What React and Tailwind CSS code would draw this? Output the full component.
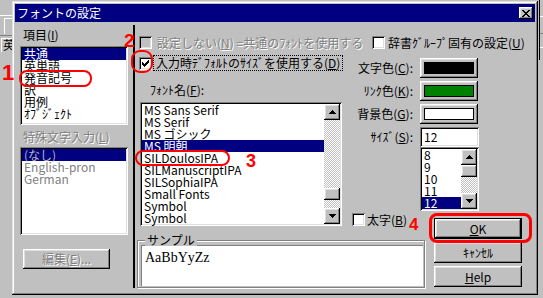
import React from "react";

const RAISED =
  "shadow-[inset_-1px_-1px_#000000,inset_1px_1px_#ffffff,inset_-2px_-2px_#808080,inset_2px_2px_#dfdfdf]";
const SUNKEN =
  "shadow-[inset_1px_1px_#808080,inset_-1px_-1px_#ffffff,inset_2px_2px_#000000,inset_-2px_-2px_#dfdfdf]";
const WINDOW =
  "shadow-[inset_-1px_-1px_#000000,inset_1px_1px_#dfdfdf,inset_-2px_-2px_#808080,inset_2px_2px_#ffffff]";
const DISABLED = "text-[#808080] [text-shadow:1px_1px_0_#ffffff]";
const CHECKER =
  "bg-[image:repeating-conic-gradient(#c0c0c0_0%_25%,#ffffff_0%_50%)] bg-size-[2px_2px]";

const UP = "M3 0h1v1h-1z M2 1h3v1h-3z M1 2h5v1h-5z M0 3h7v1h-7z";
const DOWN = "M0 0h7v1h-7z M1 1h5v1h-5z M2 2h3v1h-3z M3 3h1v1h-1z";
const CHECKMARK =
  "M6 0h1v1h-1z M5 1h2v1h-2z M0 2h1v1h-1z M4 2h3v1h-3z M0 3h2v1h-2z M3 3h3v1h-3z M0 4h5v1h-5z M1 5h3v1h-3z M2 6h1v1h-1z";
const CLOSEX =
  "M0 0h2v1h-2z M6 0h2v1h-2z M1 1h2v1h-2z M5 1h2v1h-2z M2 2h4v1h-4z M3 3h2v1h-2z M2 4h4v1h-4z M1 5h2v1h-2z M5 5h2v1h-2z M0 6h2v1h-2z M6 6h2v1h-2z";

function Check({ checked, disabled }) {
  return (
    <div
      className={`w-[13px] h-[13px] shrink-0 flex items-center justify-center ${
        disabled ? "bg-[#c0c0c0]" : "bg-white"
      } ${SUNKEN}`}
    >
      {checked && (
        <svg width="7" height="7" viewBox="0 0 7 7" shapeRendering="crispEdges">
          <path d={CHECKMARK} fill="#000000" />
        </svg>
      )}
    </div>
  );
}

function ArrowBtn({ dir }) {
  return (
    <div
      className={`w-[16px] h-[16px] shrink-0 bg-[#c0c0c0] flex items-center justify-center ${RAISED}`}
    >
      <svg width="7" height="4" viewBox="0 0 7 4" shapeRendering="crispEdges">
        <path d={dir === "up" ? UP : DOWN} fill="#000000" />
      </svg>
    </div>
  );
}

function Scrollbar({ thumb }) {
  return (
    <div className="w-[16px] h-full flex flex-col shrink-0">
      <ArrowBtn dir="up" />
      <div className={`flex-1 ${CHECKER}`}>
        <div className={`w-[16px] h-[12px] bg-[#c0c0c0] ${RAISED} ${thumb}`} />
      </div>
      <ArrowBtn dir="down" />
    </div>
  );
}

function Row({ children, sel, dis }) {
  let cls = "text-black";
  if (sel && dis) cls = "bg-[#000080] text-[#b8b8b8]";
  else if (sel) cls = "bg-[#000080] text-white";
  else if (dis) cls = "text-[#808080]";
  return (
    <div className={`h-[12px] leading-[12px] pl-[2px] whitespace-nowrap ${cls}`}>
      {children}
    </div>
  );
}

function ColorRow({ label, swatch, first }) {
  return (
    <div className={`flex items-center h-[20px] ${first ? "mt-[9px]" : "mt-[3px]"}`}>
      <span className="w-[68px] text-right whitespace-nowrap">{label}</span>
      <div className={`ml-[7px] w-[58px] h-[20px] bg-[#c0c0c0] p-[4px] ${RAISED}`}>
        <div className={`w-full h-full border border-black ${swatch}`} />
      </div>
    </div>
  );
}

function Btn({ children, cls }) {
  return (
    <div
      className={`h-[21px] bg-[#c0c0c0] flex items-center justify-center ${RAISED} ${cls}`}
    >
      {children}
    </div>
  );
}

export default function App() {
  return (
    <div className="relative w-[543px] h-[298px] overflow-hidden bg-[#c0c0c0] font-['Noto_Sans_CJK_JP','Noto_Sans',sans-serif] text-[12px] leading-[12px] text-black">
      {/* background window remnants */}
      <div className="absolute left-0 top-[15px] w-[12px] h-px bg-white" />
      <div className="absolute left-[4px] top-[18px] w-[8px] h-[16px] border-l border-t border-white" />
      <div className="absolute left-0 top-[35px] w-[12px] h-px bg-[#808080]" />
      <div className="absolute left-[1px] top-[38px] w-[11px] h-[14px] border-l border-t border-white" />
      <div className="absolute left-[3px] top-[39px] text-[12px] leading-[12px]">英</div>
      <div className="absolute left-[539px] top-0 w-px h-[60px] bg-black" />
      <div className="absolute left-[540px] top-[16px] w-[3px] h-px bg-white" />
      <div className="absolute left-[540px] top-[33px] w-[3px] h-px bg-[#808080]" />
      <div className="absolute left-[540px] top-[47px] w-[3px] h-px bg-white" />

      {/* dialog window */}
      <div
        className={`absolute left-[12px] top-[1px] w-[526px] h-[294px] bg-[#c0c0c0] p-[3px] flex flex-col ${WINDOW}`}
      >
        {/* title bar */}
        <div className="h-[18px] bg-[#000080] flex items-center justify-between pl-[2px] pr-[2px]">
          <span className="text-white text-[12px] leading-[12px] whitespace-nowrap">
            フォントの設定
          </span>
          <div
            className={`w-[14px] h-[12px] bg-[#c0c0c0] flex items-center justify-center ${RAISED}`}
          >
            <svg width="8" height="7" viewBox="0 0 8 7" shapeRendering="crispEdges">
              <path d={CLOSEX} fill="#000000" />
            </svg>
          </div>
        </div>

        {/* body */}
        <div className="flex h-[270px]">
          {/* left panel */}
          <div className="w-[118px] flex flex-col shrink-0">
            <div className="mt-[7px] ml-[8px] h-[12px] whitespace-nowrap">
              項目(<u>I</u>)
            </div>
            <div className={`mt-[5px] ml-[5px] w-[108px] h-[79px] bg-white p-[2px] ${SUNKEN}`}>
              <Row sel>共通</Row>
              <Row>英単語</Row>
              <Row>発音記号</Row>
              <Row>訳</Row>
              <Row>用例</Row>
              <Row>ｵﾌﾞｼﾞｪｸﾄ</Row>
            </div>
            <div className={`mt-[6px] ml-[8px] h-[12px] whitespace-nowrap ${DISABLED}`}>
              特殊文字入力(<u>L</u>)
            </div>
            <div className={`mt-[4px] ml-[5px] w-[108px] h-[88px] bg-white p-[2px] ${SUNKEN}`}>
              <Row sel dis>
                (なし)
              </Row>
              <Row dis>English-pron</Row>
              <Row dis>German</Row>
            </div>
            <div
              className={`mt-[14px] ml-[8px] w-[87px] h-[20px] flex items-center justify-center whitespace-nowrap ${RAISED} ${DISABLED}`}
            >
              編集(<u>E</u>)...
            </div>
          </div>

          {/* separator */}
          <div className="w-[2px] bg-black mt-[3px] mb-[4px] shrink-0" />

          {/* right panel */}
          <div className="flex w-[400px]">
            {/* middle column */}
            <div className="w-[210px] flex flex-col shrink-0">
              <div className="mt-[14px] ml-[4px] flex items-center h-[13px]">
                <Check disabled />
                <span className={`ml-[5px] whitespace-nowrap ${DISABLED}`}>
                  設定しない(<u>N</u>) =共通のﾌｫﾝﾄを使用する
                </span>
              </div>
              <div className="mt-[6px] ml-[4px] flex items-center h-[16px]">
                <Check checked />
                <span className="block ml-[1px] h-[16px] leading-[14px] px-[2px] border border-dotted border-black whitespace-nowrap">
                  入力時ﾃﾞﾌｫﾙﾄのｻｲｽﾞを使用する(<u>D</u>)
                </span>
              </div>
              <div className="mt-[13px] ml-[15px] h-[12px] whitespace-nowrap">
                ﾌｫﾝﾄ名(<u>F</u>):
              </div>
              <div
                className={`mt-[6px] ml-[5px] w-[202px] h-[124px] bg-white p-[2px] flex ${SUNKEN}`}
              >
                <div className="flex-1 min-w-0">
                  <Row>MS Sans Serif</Row>
                  <Row>MS Serif</Row>
                  <Row>MS ゴシック</Row>
                  <Row sel>MS 明朝</Row>
                  <Row>SILDoulosIPA</Row>
                  <Row>SILManuscriptIPA</Row>
                  <Row>SILSophiaIPA</Row>
                  <Row>Small Fonts</Row>
                  <Row>Symbol</Row>
                  <Row>Symbol</Row>
                </div>
                <Scrollbar thumb="mt-[68px]" />
              </div>
              {/* sample group */}
              <div className="relative mt-[8px] ml-[2px] w-[288px] h-[54px]">
                <div className="mt-[6px] h-[48px] border border-[#808080] shadow-[inset_1px_1px_#ffffff,1px_1px_#ffffff] pt-[4px] pl-[3px]">
                  <div className="w-[282px] h-[41px] bg-white shadow-[inset_1px_1px_#808080] pl-[4px] pt-[6px] font-['Liberation_Serif',serif] text-[14px] leading-[14px]">
                    AaBbYyZz
                  </div>
                </div>
                <span className="absolute left-[8px] top-0 px-[2px] bg-[#c0c0c0] h-[12px] leading-[12px] whitespace-nowrap">
                  サンプル
                </span>
              </div>
            </div>

            {/* right column */}
            <div className="w-[190px] flex flex-col shrink-0">
              <div className="mt-[14px] ml-[27px] flex items-center h-[13px]">
                <Check />
                <span className="ml-[3px] whitespace-nowrap">
                  辞書ｸﾞﾙｰﾌﾟ固有の設定(<u>U</u>)
                </span>
              </div>
              <ColorRow
                first
                label={
                  <>
                    文字色(<u>C</u>):
                  </>
                }
                swatch="bg-black"
              />
              <ColorRow
                label={
                  <>
                    ﾘﾝｸ色(<u>K</u>):
                  </>
                }
                swatch="bg-[#008000]"
              />
              <ColorRow
                label={
                  <>
                    背景色(<u>G</u>):
                  </>
                }
                swatch="bg-white"
              />
              <div className="mt-[3px] flex items-center h-[20px]">
                <span className="w-[68px] text-right whitespace-nowrap">
                  ｻｲｽﾞ(<u>S</u>):
                </span>
                <div
                  className={`ml-[7px] w-[59px] h-[20px] bg-white pl-[4px] flex items-center ${SUNKEN}`}
                >
                  12
                </div>
              </div>
              <div className={`ml-[75px] w-[59px] h-[64px] bg-white p-[2px] flex ${SUNKEN}`}>
                <div className="flex-1 min-w-0">
                  <Row>8</Row>
                  <Row>9</Row>
                  <Row>10</Row>
                  <Row>11</Row>
                  <Row sel>12</Row>
                </div>
                <Scrollbar thumb="mt-0" />
              </div>
              <div className="flex items-start">
                <div className="ml-[7px] mt-[2px] w-[75px] flex items-center h-[13px] shrink-0">
                  <Check />
                  <span className="ml-[2px] whitespace-nowrap">
                    太字(<u>B</u>)
                  </span>
                </div>
                <div className="ml-[7px] mt-[7px] w-[88px] flex flex-col shrink-0">
                  <div className="h-[21px] border border-black bg-[#c0c0c0]">
                    <div className={`h-full flex items-center justify-center ${RAISED}`}>
                      <span>
                        <u>O</u>K
                      </span>
                    </div>
                  </div>
                  <Btn cls="mt-[3px]">ｷｬﾝｾﾙ</Btn>
                  <Btn cls="mt-[3px]">
                    <span>
                      <u>H</u>elp
                    </span>
                  </Btn>
                </div>
              </div>
            </div>
          </div>
        </div>
      </div>

      {/* red annotations */}
      <div className="absolute left-[19px] top-[70px] w-[73px] h-[17px] rounded-[8px] border-2 border-[#ff0000]" />
      <div className="absolute left-[131px] top-[50px] w-[22px] h-[23px] rounded-[9px] border-2 border-[#ff0000]" />
      <div className="absolute left-[135px] top-[150px] w-[95px] h-[16px] rounded-[8px] border-2 border-[#ff0000]" />
      <div className="absolute left-[429px] top-[213px] w-[103px] h-[30px] rounded-[8px] border-[3px] border-[#ff0000]" />
      <div className="absolute left-[2px] top-[62px] text-[#ff0000] font-['Liberation_Sans',sans-serif] font-bold text-[22px] leading-[22px]">
        1
      </div>
      <div className="absolute left-[124px] top-[31px] text-[#ff0000] font-['Liberation_Sans',sans-serif] font-bold text-[19px] leading-[19px]">
        2
      </div>
      <div className="absolute left-[246px] top-[152px] text-[#ff0000] font-['Liberation_Sans',sans-serif] font-bold text-[18px] leading-[18px]">
        3
      </div>
      <div className="absolute left-[409px] top-[216px] text-[#ff0000] font-['Liberation_Sans',sans-serif] font-bold text-[17px] leading-[17px]">
        4
      </div>
    </div>
  );
}
